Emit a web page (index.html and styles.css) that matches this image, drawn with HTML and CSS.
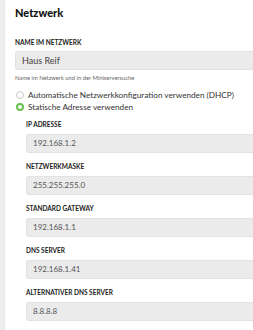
FILE: index.html
```html
<!DOCTYPE html>
<html>

<head>
  <meta name="viewport" content="width=device-width, initial-scale=1">
  <link rel="stylesheet" href="styles.css">
</head>

<body>
  <div class="page">
    <div class="sidebar"></div>

    <section class="content">
      <h2>Netzwerk</h2>

      <div class="field name">
        <label>Name im Netzwerk</label>
        <div class="input big">Haus Reif</div>
        <div class="hint">Name im Netzwerk und in der Miniserversuche</div>
      </div>

      <div class="radios">
        <div class="radio"><span class="dot"></span>Automatische Netzwerkkonfiguration verwenden (DHCP)</div>
        <div class="radio"><span class="dot on"></span>Statische Adresse verwenden</div>
      </div>

      <div class="static">
        <div class="field">
          <label>IP Adresse</label>
          <div class="input">192.168.1.2</div>
        </div>
        <div class="field">
          <label>Netzwerkmaske</label>
          <div class="input">255.255.255.0</div>
        </div>
        <div class="field">
          <label>Standard Gateway</label>
          <div class="input">192.168.1.1</div>
        </div>
        <div class="field">
          <label>DNS Server</label>
          <div class="input">192.168.1.41</div>
        </div>
        <div class="field">
          <label>Alternativer DNS Server</label>
          <div class="input">8.8.8.8</div>
        </div>
      </div>
    </section>
  </div>
</body>

</html>
```

FILE: styles.css
```css
/* ----------App-Shell--------------- */
body {
  padding: 0px;
  margin: 0px;
  font-family: Lato, "Open Sans", sans-serif;
  color: #222;
  background: #fff;
  overflow: hidden;
}

.page {
  display: flex;
  flex-direction: row;
  width: 253px;
  height: 330px;
}

.sidebar {
  width: 4px;
  flex: none;
  background-color: #eeeeee;
  border-right: 1px solid #e6e6e6;
}

.content {
  flex: 1;
  min-width: 0px;
  padding: 6px 0px 0px 10px;
}

h2 {
  margin: 0px;
  font-size: 11px;
  line-height: 14px;
  font-weight: 900;
  color: #111;
}

/* --------------form---------------------------- */
.field {
  display: flex;
  flex-direction: column;
  margin-bottom: 9px;
}

.field.name {
  margin-top: 18px;
  margin-bottom: 0px;
}

label {
  font-size: 6.5px;
  line-height: 10px;
  font-weight: 700;
  text-transform: uppercase;
  color: #222;
  margin-bottom: 4px;
}

.field.name label {
  margin-bottom: 3px;
}

/* inputs run on past the right edge of the panel */
.input {
  height: 17px;
  line-height: 17px;
  border: 1px solid #e2e2e2;
  border-right: none;
  border-radius: 3px 0px 0px 3px;
  background-color: #ebebeb;
  padding-left: 6px;
  font-size: 8px;
  color: #555;
}

.input.big {
  font-size: 9px;
  color: #444;
}

.hint {
  font-size: 5.8px;
  line-height: 10px;
  margin-top: 3px;
  color: #666;
}

.radios {
  margin-top: 6px;
}

.radio {
  display: flex;
  flex-direction: row;
  align-items: center;
  height: 12px;
  font-size: 8.2px;
  color: #333;
  white-space: nowrap;
}

.dot {
  width: 8px;
  height: 8px;
  flex: none;
  box-sizing: border-box;
  border: 1px solid #c8c8c8;
  border-radius: 50%;
  margin: 0px 4px 0px 1px;
  background: #fff;
}

.dot.on {
  border: 2.5px solid #69c350;
}

.static {
  margin-top: 7px;
  padding-left: 11px;
}
```
